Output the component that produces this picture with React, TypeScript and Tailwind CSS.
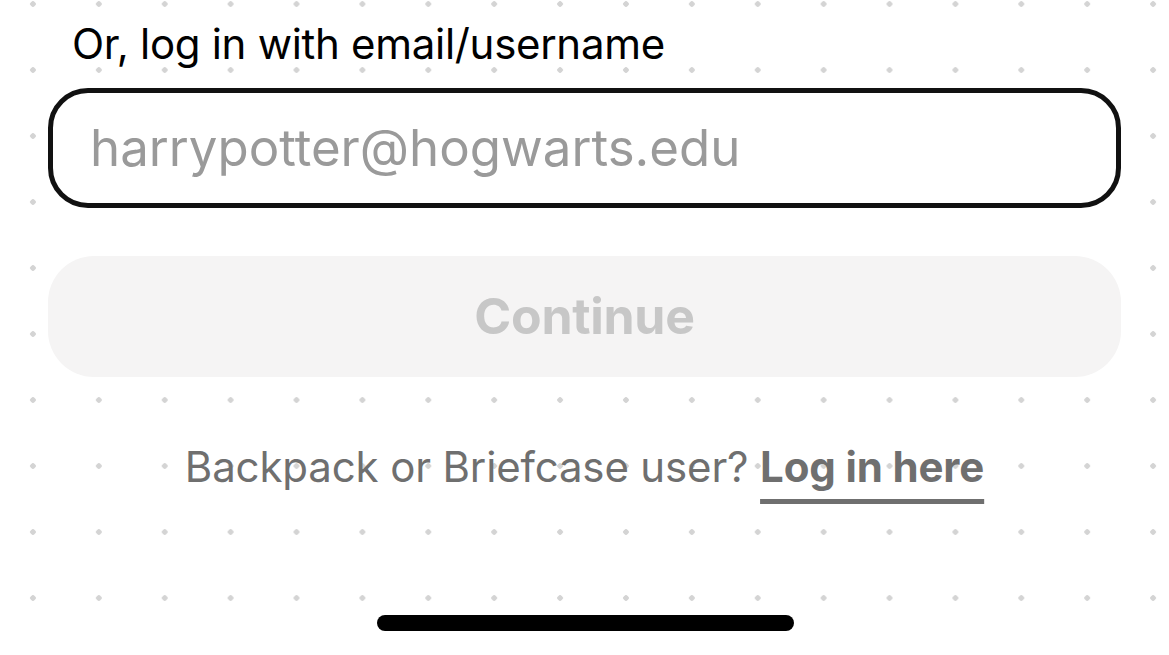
export default function App() {
  return (
    <div
      className="relative h-[655px] w-[1169px] overflow-hidden bg-white bg-[radial-gradient(circle,#d4d4d4_2.5px,transparent_3px)] bg-[size:65.9px_66px] bg-[position:0px_-29px]"
      style={{ fontFamily: "Inter, 'Noto Sans', sans-serif" }}
    >
      <div className="flex flex-col px-[48px] pt-[17px]">
        <label className="pl-[24px] text-[42px] leading-[54px] tracking-[-0.3px] text-black">
          Or, log in with email/username
        </label>

        <div className="mt-[17px] flex h-[120px] items-center rounded-[40px] border-[5.5px] border-[#111] bg-white px-[37px]">
          <input
            className="w-full bg-transparent text-[51px] tracking-[0px] text-black outline-none placeholder:text-[#9a9a9a]"
            placeholder="harrypotter@hogwarts.edu"
          />
        </div>

        <button className="mt-[48px] flex h-[121px] items-center justify-center rounded-[46px] bg-[#f5f4f4] text-[50px] font-bold tracking-[-0.3px] text-[#c7c7c7]">
          Continue
        </button>

        <p className="mt-[63px] text-center text-[42px] leading-[54px] tracking-[-0.15px] text-[#6f6f6f]">
          Backpack or Briefcase user?{" "}
          <a className="font-bold underline decoration-[5px] underline-offset-[17px] decoration-[#6f6f6f]">
            Log in here
          </a>
        </p>
      </div>

      <div className="absolute bottom-[24px] left-[377px] h-[16px] w-[417px] rounded-full bg-black" />
    </div>
  );
}
